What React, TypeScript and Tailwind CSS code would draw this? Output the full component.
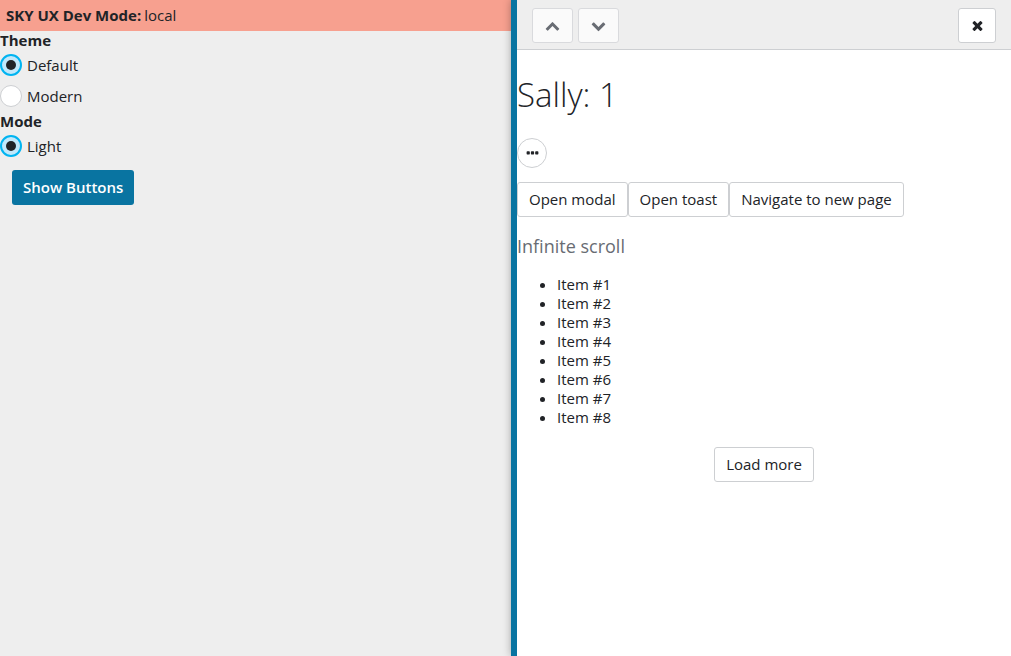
import { useState } from 'react';
import type { ButtonHTMLAttributes, ReactNode } from 'react';

const chevronUp =
  'M1683 1331l-166 165q-19 19-45 19t-45-19l-531-531-531 531q-19 19-45 19t-45-19l-166-165q-19-19-19-45.500t19-45.500l742-741q19-19 45-19t45 19l742 741q19 19 19 45.500t-19 45.500z';
const chevronDown =
  'M1683 808l-742 741q-19 19-45 19t-45-19l-742-741q-19-19-19-45.500t19-45.500l166-165q19-19 45-19t45 19l531 531 531-531q19-19 45-19t45 19l166 165q19 19 19 45.500t-19 45.500z';
const times =
  'M1490 1322q0 40-28 68l-136 136q-28 28-68 28t-68-28l-294-294-294 294q-28 28-68 28t-68-28l-136-136q-28-28-28-68t28-68l294-294-294-294q-28-28-28-68t28-68l136-136q28-28 68-28t68 28l294 294 294-294q28-28 68-28t68 28l136 136q28 28 28 68t-28 68l-294 294 294 294q28 28 28 68z';
const ellipsis =
  'M576 736v192q0 40-28 68t-68 28h-192q-40 0-68-28t-28-68v-192q0-40 28-68t68-28h192q40 0 68 28t28 68zm512 0v192q0 40-28 68t-68 28h-192q-40 0-68-28t-28-68v-192q0-40 28-68t68-28h192q40 0 68 28t28 68zm512 0v192q0 40-28 68t-68 28h-192q-40 0-68-28t-28-68v-192q0-40 28-68t68-28h192q40 0 68 28t28 68z';

function Icon({ path }: { path: string }) {
  return (
    <svg viewBox="0 0 1792 1792" className="size-[15px] shrink-0" fill="currentColor" aria-hidden="true">
      <path d={path} />
    </svg>
  );
}

function Button({ children, ...rest }: ButtonHTMLAttributes<HTMLButtonElement>) {
  return (
    <button
      type="button"
      className="h-[35px] rounded-[3px] border border-[#cdcfd2] bg-white px-[11px] whitespace-nowrap"
      {...rest}
    >
      {children}
    </button>
  );
}

function IconButton({ label, path, disabled }: { label: string; path: string; disabled?: boolean }) {
  return (
    <button
      type="button"
      aria-label={label}
      disabled={disabled}
      className="flex h-[35px] w-[38px] items-center justify-center rounded-[3px] border border-[#cdcfd2] bg-white disabled:w-[41px] disabled:border-[#d9dadd] disabled:bg-[#fafafa] disabled:text-[#686c73]"
    >
      <Icon path={path} />
    </button>
  );
}

function Radio({
  name,
  checked,
  onChange,
  children,
}: {
  name: string;
  checked: boolean;
  onChange: () => void;
  children: ReactNode;
}) {
  return (
    <label className="flex items-center gap-[5px]">
      <input
        type="radio"
        name={name}
        checked={checked}
        onChange={onChange}
        className="grid size-[22px] appearance-none place-items-center rounded-full border border-[#cdcfd2] bg-white before:size-[10px] before:rounded-full checked:border-2 checked:border-[#00b4f1] checked:bg-[#c1e8fb] checked:before:bg-[#212327]"
      />
      {children}
    </label>
  );
}

export default function App() {
  const [theme, setTheme] = useState('default');
  const items = [1, 2, 3, 4, 5, 6, 7, 8];

  return (
    <div className="flex min-h-screen bg-[#eeeeee] font-['Open_Sans',sans-serif] text-[15px] leading-[19px] text-[#212327]">
      <main className="min-w-0 flex-1">
        <header className="flex gap-[3px] bg-[#f7a08f] p-[6px]">
          <strong className="font-bold">SKY UX Dev Mode:</strong>
          <span>local</span>
        </header>
        <fieldset>
          <legend className="pb-px font-bold">Theme</legend>
          <div className="flex flex-col gap-[9px] pt-[3px] pb-[5px]">
            <Radio name="theme" checked={theme === 'default'} onChange={() => setTheme('default')}>
              Default
            </Radio>
            <Radio name="theme" checked={theme === 'modern'} onChange={() => setTheme('modern')}>
              Modern
            </Radio>
          </div>
        </fieldset>
        <fieldset>
          <legend className="pb-px font-bold">Mode</legend>
          <div className="pt-[3px]">
            <Radio name="mode" checked onChange={() => undefined}>
              Light
            </Radio>
          </div>
        </fieldset>
        <button
          type="button"
          className="mt-[13px] ml-3 h-[35px] rounded-[3px] bg-[#0974a1] px-[11px] font-semibold text-white"
        >
          Show Buttons
        </button>
      </main>

      <aside className="w-[500px] border-l-6 border-[#0974a1] bg-white shadow-[0_0_8px_rgba(0,0,0,0.3)]">
        <header className="flex items-center gap-[5px] border-b border-[#cdcfd2] bg-[#eeeeee] px-[15px] pt-2 pb-[6px]">
          <IconButton label="Previous" path={chevronUp} disabled />
          <IconButton label="Next" path={chevronDown} disabled />
          <div className="ml-auto">
            <IconButton label="Close" path={times} />
          </div>
        </header>
        <h1 className="mt-[22px] text-[33px] leading-[46px] font-light">Sally: 1</h1>
        <button
          type="button"
          aria-label="Context menu"
          className="mt-5 flex size-[30px] items-center justify-center rounded-full border border-[#cdcfd2] bg-white"
        >
          <Icon path={ellipsis} />
        </button>
        <div className="mt-[14px] flex">
          <Button>Open modal</Button>
          <Button>Open toast</Button>
          <Button>Navigate to new page</Button>
        </div>
        <h2 className="mt-[17px] text-[18px] leading-6 text-[#686c73]">Infinite scroll</h2>
        <ul className="mt-[17px] list-disc pl-10">
          {items.map((item) => (
            <li key={item}>Item #{item}</li>
          ))}
        </ul>
        <div className="mt-5 flex justify-center">
          <Button>Load more</Button>
        </div>
      </aside>
    </div>
  );
}
